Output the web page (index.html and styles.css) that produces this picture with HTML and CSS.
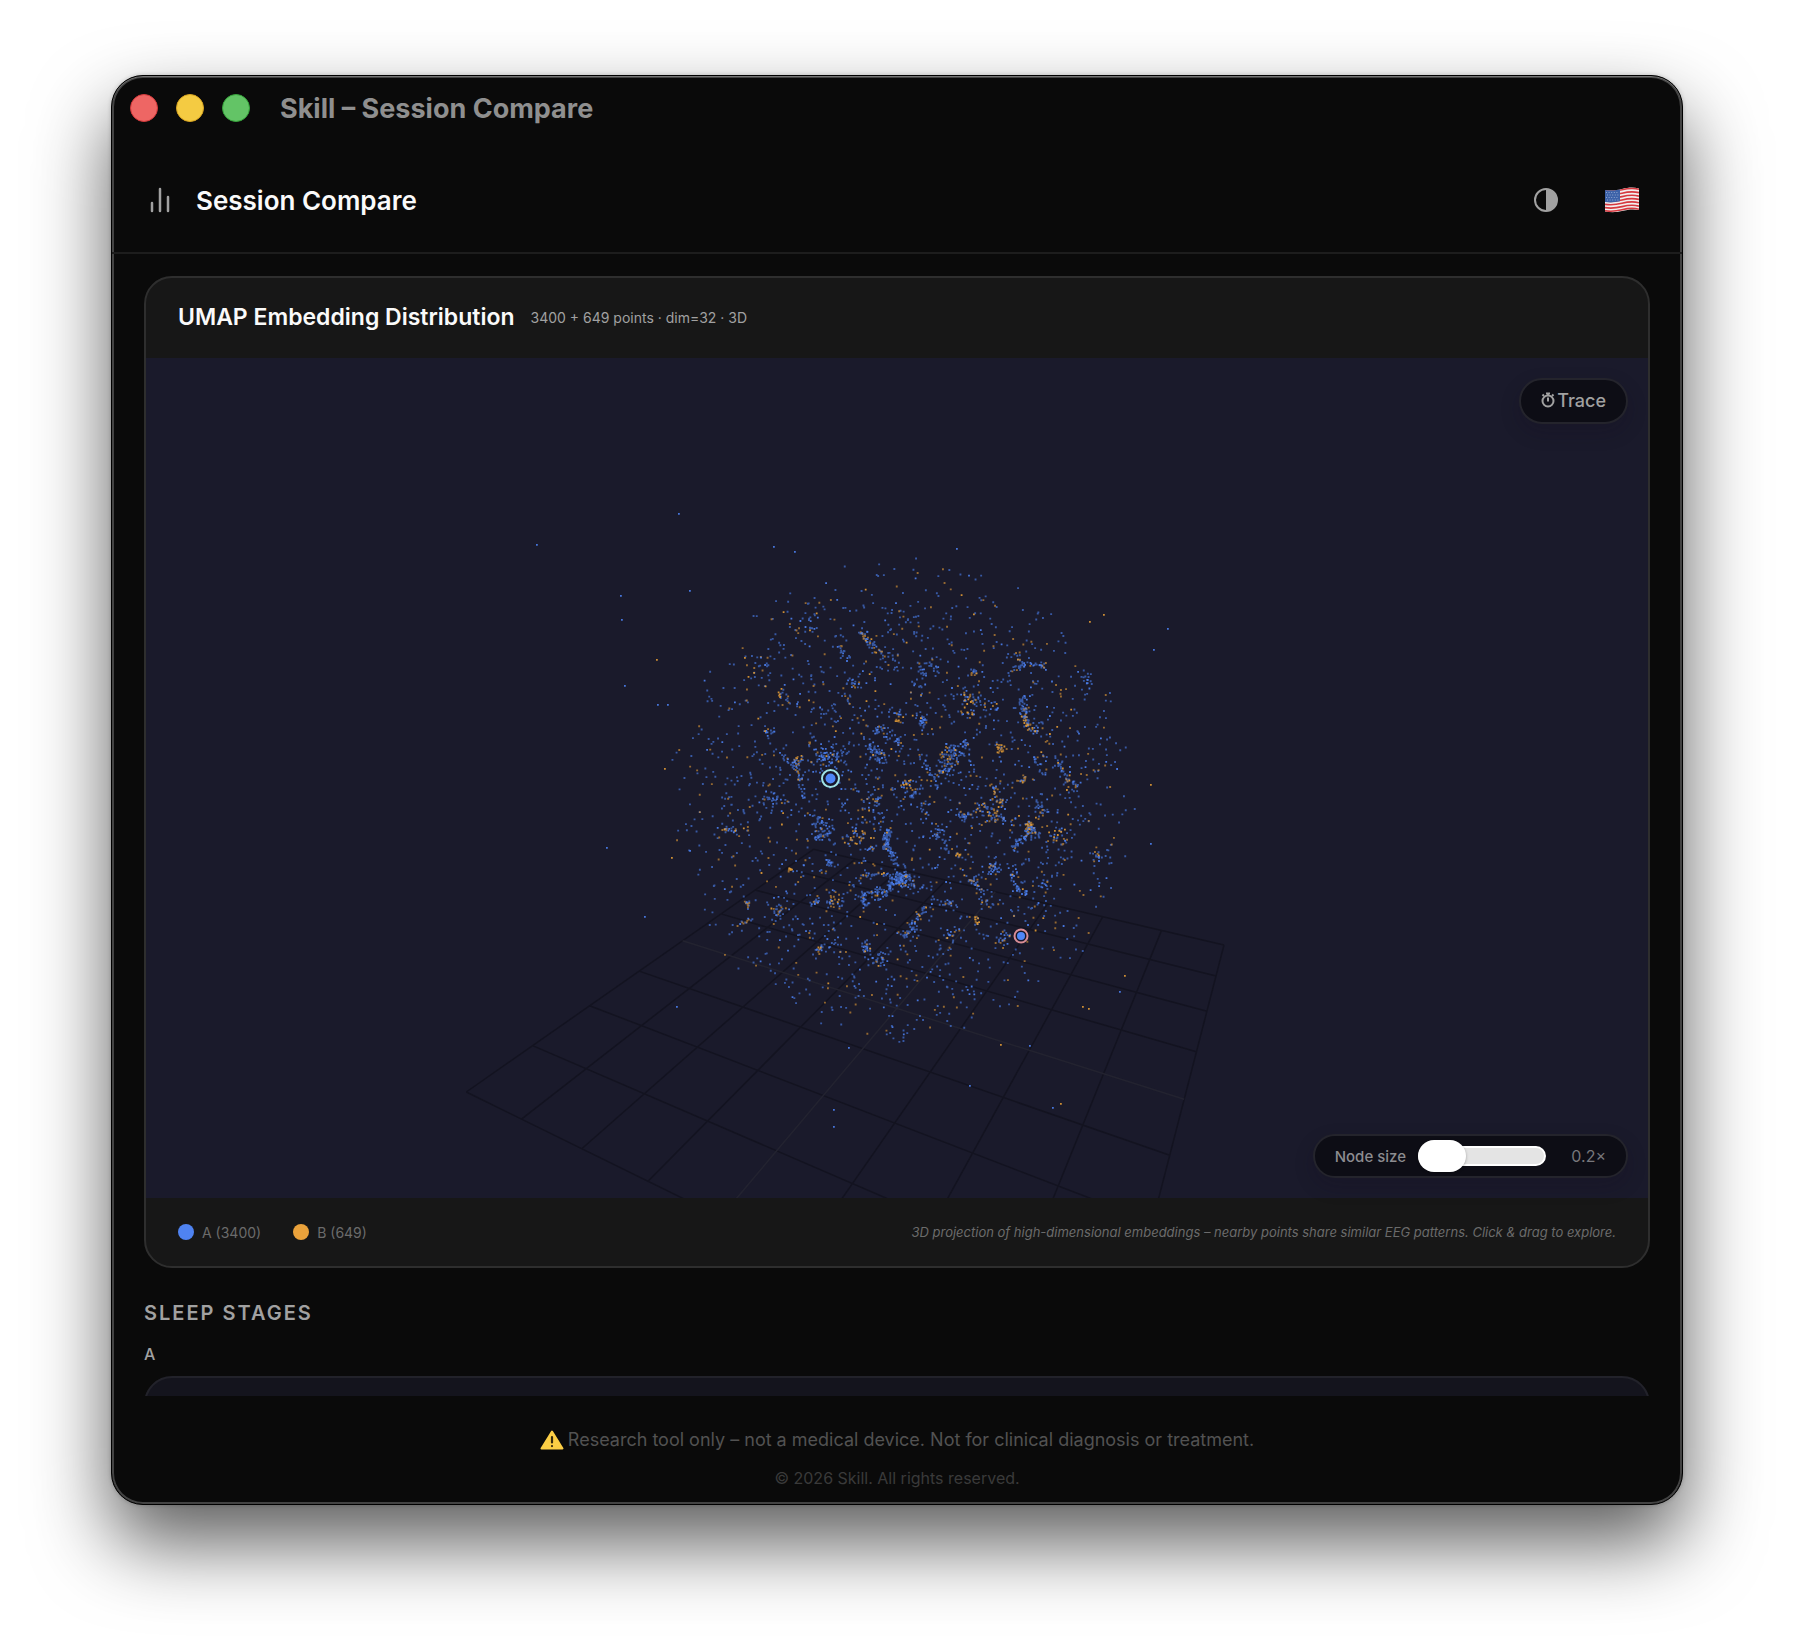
FILE: index.html
```html
<!DOCTYPE html>
<html lang="en">
<head>
<meta charset="utf-8">
<title>Skill – Session Compare</title>
<link rel="stylesheet" href="styles.css">
</head>
<body>
<div class="window">
  <div class="titlebar">
    <div class="lights">
      <button class="light light-close" type="button" aria-label="Close"></button>
      <button class="light light-min" type="button" aria-label="Minimize"></button>
      <button class="light light-max" type="button" aria-label="Zoom"></button>
    </div>
    <span class="window-title">Skill – Session Compare</span>
  </div>

  <header class="header">
    <svg class="bars-icon" viewBox="0 0 24 28" aria-hidden="true"><path d="M4 17v8M12 3v22M20 11v14"/></svg>
    <h1 class="header-title">Session Compare</h1>
    <div class="header-actions">
      <button class="icon-button" type="button" aria-label="Toggle theme">
        <svg class="theme-icon" viewBox="0 0 24 24"><circle cx="12" cy="12" r="11"/><path d="M12 1a11 11 0 0 1 0 22z"/></svg>
      </button>
      <button class="icon-button" type="button" aria-label="Language">
        <svg class="flag-icon" viewBox="0 0 34 26">
          <defs><clipPath id="flag-shape"><path d="M0 3C6 4 11 3.500 17 2S28 0 34 1.500V23C28 22 23 22.500 17 24S6 25.500 0 24.500Z"/></clipPath></defs>
          <g clip-path="url(#flag-shape)">
            <path fill="#f2eeee" d="M0 0h34v26H0z"/>
            <g fill="none" stroke="#d6383f" stroke-width="1.7">
              <path d="M0 3.800C6 4.800 11 4.300 17 2.800S28 .8 34 2.300M0 7.200C6 8.200 11 7.700 17 6.200S28 4.200 34 5.700M0 10.600C6 11.600 11 11.100 17 9.600S28 7.600 34 9.100M0 14C6 15 11 14.500 17 13S28 11 34 12.500M0 17.300C6 18.300 11 17.800 17 16.300S28 14.300 34 15.800M0 20.600C6 21.600 11 21.100 17 19.600S28 17.600 34 19.100M0 23.800C6 24.800 11 24.300 17 22.800S28 20.800 34 22.300"/>
            </g>
            <path fill="#3d62a8" d="M0 0H15V14.300C10 15.400 5 15.800 0 15Z"/>
            <path stroke="#8fa6d0" stroke-width="1" stroke-dasharray="1 1.600" d="M1 5.500h13M2 8h13M1 10.500h13M2 13h13"/>
          </g>
        </svg>
      </button>
    </div>
  </header>

  <main class="content">
    <section class="card">
      <div class="card-header">
        <h2 class="card-title">UMAP Embedding Distribution</h2>
        <span class="card-meta">3400 + 649 points · dim=32 · 3D</span>
      </div>
      <div class="plot">
        <svg class="plot-scene" id="scene" viewBox="0 0 1502 840" preserveAspectRatio="xMidYMid slice" role="img" aria-label="3D scatter of embeddings">
          <path class="grid-line" id="grid"/>
          <path class="grid-axis" id="axes"/>
          <path class="dots-a dim" id="a-dim"/>
          <path class="dots-b dim" id="b-dim"/>
          <path class="dots-a" id="a-bright"/>
          <path class="dots-b" id="b-bright"/>
          <circle class="ring ring-teal" cx="684.500" cy="420.500" r="8.500"/>
          <circle class="marker" cx="684.500" cy="420.500" r="5"/>
          <circle class="ring ring-pink" cx="875" cy="578" r="6.500"/>
          <circle class="marker" cx="875" cy="578" r="4"/>
        </svg>
        <button class="pill trace" type="button">
          <svg class="watch-icon" viewBox="0 0 14 16" aria-hidden="true"><circle cx="7" cy="9" r="5.500"/><path d="M7 5.500v4M5 1.500h4M7 1.500v2M11 4l1.500-1.500M3 4L1.500 2.500"/></svg>
          <span>Trace</span>
        </button>
        <div class="pill size">
          <label for="node-size">Node size</label>
          <input class="slider" id="node-size" type="range" min="0.2" max="3" step="0.1" value="0.2">
          <output class="size-value" for="node-size">0.2×</output>
        </div>
      </div>
      <div class="card-footer">
        <span class="legend"><i class="dot dot-a"></i>A (3400)</span>
        <span class="legend"><i class="dot dot-b"></i>B (649)</span>
        <em class="note">3D projection of high-dimensional embeddings – nearby points share similar EEG patterns. Click &amp; drag to explore.</em>
      </div>
    </section>

    <section class="stages">
      <h2 class="section-title">SLEEP STAGES</h2>
      <h3 class="session-label">A</h3>
      <div class="stage-card"></div>
    </section>
  </main>

  <footer class="footer">
    <p class="disclaimer">
      <svg class="warn-icon" viewBox="0 0 24 20" aria-hidden="true"><path fill="#fbce45" stroke="#fbce45" stroke-width="2" stroke-linejoin="round" d="M12 1.500L22.500 18.500H1.500Z"/><path stroke="#33290f" stroke-width="2.200" stroke-linecap="round" d="M12 7v5.500M12 16v.1"/></svg>
      <span>Research tool only – not a medical device. Not for clinical diagnosis or treatment.</span>
    </p>
    <p class="copyright">© 2026 Skill. All rights reserved.</p>
  </footer>
</div>
<script src="scatter.js"></script>
</body>
</html>
```

FILE: styles.css
```css
* { box-sizing: border-box; }

body {
  margin: 0;
  height: 100vh;
  padding: 75px 111px 147px;
  background: #fff;
  color: #fafafa;
  font-family: Inter, "Liberation Sans", sans-serif;
  display: flex;
}

h1, h2, h3, p { margin: 0; }

button {
  font: inherit;
  color: inherit;
  border: 0;
  padding: 0;
  background: none;
}

.window {
  flex: 1;
  min-width: 0;
  display: flex;
  flex-direction: column;
  background: #0a0a0a;
  border: 1px solid #000;
  border-radius: 32px;
  box-shadow:
    inset 0 1px 0 #757575,
    inset 0 0 0 2px #434343,
    0 38px 78px rgba(0, 0, 0, 0.64),
    0 0 4px rgba(0, 0, 0, 0.2);
}

.titlebar {
  height: 72px;
  padding: 0 18px 8px;
  display: flex;
  align-items: center;
  gap: 30px;
}

.lights { display: flex; gap: 18px; }
.light { width: 28px; height: 28px; border-radius: 50%; border: 1px solid; }
.light-close { background: #ee6664; border-color: #d5383a; }
.light-min { background: #f4cb42; border-color: #d9a520; }
.light-max { background: #63c466; border-color: #35a33a; }

.window-title { font-size: 27px; font-weight: 700; color: #8f8f8f; }

.header {
  height: 106px;
  padding: 0 30px 0 36px;
  display: flex;
  align-items: center;
  gap: 24px;
  border-bottom: 2px solid #1d1d1d;
}

.bars-icon {
  width: 24px;
  height: 28px;
  fill: none;
  stroke: #a1a1a1;
  stroke-width: 2.5;
  stroke-linecap: round;
}

.header-title { font-size: 26px; font-weight: 600; }
.header-actions { margin-left: auto; display: flex; gap: 16px; }
.icon-button { width: 60px; height: 60px; display: grid; place-items: center; }
.theme-icon { width: 24px; height: 24px; }
.theme-icon circle { fill: none; stroke: #a1a1a1; stroke-width: 2; }
.theme-icon path { fill: #a1a1a1; }
.flag-icon { width: 34px; height: 26px; }

.content {
  flex: 1;
  min-height: 0;
  overflow: hidden;
  padding: 22px 32px 0;
}

.card {
  background: #171717;
  border: 2px solid #2e2e2e;
  border-radius: 28px;
  overflow: hidden;
}

.card-header {
  height: 80px;
  padding: 0 32px 2px;
  display: flex;
  align-items: center;
  gap: 16px;
}

.card-title { font-size: 23px; font-weight: 600; }
.card-meta { font-size: 14px; color: #a1a1a1; }

.plot {
  position: relative;
  aspect-ratio: 751 / 420;
  background: #1a1a2b;
}

.plot-scene { display: block; width: 100%; height: 100%; }
.grid-line { fill: none; stroke: #131320; stroke-width: 1.5; }
.grid-axis { fill: none; stroke: #232330; stroke-width: 1.5; }
.dots-a { fill: #4b7fee; opacity: 0.9; }
.dots-b { fill: #e09a35; opacity: 0.9; }
.dots-a.dim, .dots-b.dim { opacity: 0.62; }
.marker { fill: #4f86f7; }
.ring { fill: #16162a; stroke-width: 2; }
.ring-teal { stroke: #9fe3e6; }
.ring-pink { stroke: #d98d95; }

.pill {
  position: absolute;
  right: 20px;
  display: flex;
  align-items: center;
  border: 2px solid #24242c;
  border-radius: 23px;
  background: #0d0d15;
  box-shadow: 0 8px 20px rgba(20, 10, 30, 0.2);
}

.trace { top: 20px; height: 46px; padding: 0 20px 2px; gap: 2px; font-size: 18px; font-weight: 500; color: #a1a1a1; }
.watch-icon { width: 14px; height: 16px; fill: none; stroke: #a1a1a1; stroke-width: 2; }
.size { bottom: 20px; height: 44px; padding: 0 20px; gap: 12px; font-size: 15px; font-weight: 500; color: #8c8c90; }

.slider {
  appearance: none;
  width: 128px;
  height: 32px;
  margin: 0;
  background: none;
}

.slider::-webkit-slider-runnable-track {
  height: 20px;
  border-radius: 10px;
  border: 2px solid #fff;
  background: #e4e4e4;
}

.slider::-webkit-slider-thumb {
  appearance: none;
  width: 48px;
  height: 32px;
  margin: -8px -2px 0;
  border-radius: 16px;
  background: #fff;
  box-shadow: 0 1px 3px rgba(0, 0, 0, 0.3);
}

.size-value { width: 48px; text-align: right; font-size: 16px; font-weight: 400; color: #77777b; }

.card-footer {
  min-height: 68px;
  padding: 0 32px;
  display: flex;
  align-items: center;
  gap: 32px;
  font-size: 14px;
  color: #6b6b6b;
}

.legend { display: flex; align-items: center; gap: 8px; }
.dot { width: 16px; height: 16px; border-radius: 50%; }
.dot-a { background: #4f83f1; }
.dot-b { background: #eaa23b; }
.note { margin-left: auto; font-size: 13px; }

.stages { padding-top: 31px; }
.section-title { font-size: 20px; line-height: 28px; font-weight: 600; letter-spacing: 2px; color: #a1a1a1; }
.session-label { margin-top: 15px; font-size: 16px; line-height: 24px; font-weight: 500; color: #a1a1a1; }
.stage-card {
  height: 240px;
  margin-top: 10px;
  background: #14141d;
  border: 2px solid #22222a;
  border-radius: 28px;
}

.footer {
  padding: 30px 31px 14px;
  display: flex;
  flex-direction: column;
  align-items: center;
  gap: 12px;
}

.disclaimer { display: flex; align-items: center; gap: 4px; font-size: 18px; line-height: 28px; color: #525252; }
.warn-icon { width: 24px; height: 20px; }
.copyright { font-size: 16px; line-height: 24px; color: #3a3a3a; }
```

FILE: scatter.js
```js
// Seeded generator, so that the cloud is the same on every load.
let seed = 20260;
function rnd() {
  seed = (seed * 1664525 + 1013904223) % 4294967296;
  return seed / 4294967296;
}
const gauss = () => rnd() + rnd() + rnd() - 1.5;

const paths = { 'a-dim': '', 'b-dim': '', 'a-bright': '', 'b-bright': '' };
function dot(x, y, group, bright) {
  const s = bright ? 1.8 : 1.9;
  paths[group + (bright ? '-bright' : '-dim')] +=
    `M${x.toFixed(1)} ${y.toFixed(1)}h${s}v${s}h-${s}z`;
}

// Cluster data is stored in layout units; this maps it to the scene.
const sx = (x) => 493 + x / 2.8;
const sy = (y) => 171 + y / 2.904;

// Strands: [count, spread, share of B, x1, y1, x2, y2, ...]
const strands = [
  [26, 6, .7, 618, 298, 640, 325], [26, 10, .4, 640, 325, 690, 372], [30, 12, .05, 770, 450, 812, 380, 838, 420],
  [26, 14, .2, 570, 500, 592, 440, 606, 445], [20, 12, .1, 560, 345, 580, 375], [24, 8, .1, 1030, 412, 1085, 388],
  [18, 6, .1, 1095, 383, 1138, 400], [44, 12, .25, 900, 468, 945, 500, 1005, 518], [24, 20, .5, 930, 505, 915, 535],
  [60, 8, .3, 1070, 505, 1090, 580], [16, 12, .1, 1070, 500, 1090, 475], [16, 14, .3, 1090, 580, 1115, 588],
  [34, 12, .05, 790, 545, 792, 572], [20, 14, .7, 710, 545, 730, 545], [40, 14, .05, 632, 610, 652, 640, 672, 672],
  [24, 6, .05, 640, 625, 690, 658], [26, 20, .08, 660, 570, 680, 600], [18, 12, .2, 715, 610, 730, 630],
  [90, 38, .08, 495, 665, 530, 655, 560, 650], [46, 10, .15, 395, 648, 440, 690, 460, 775], [20, 12, .5, 430, 675, 452, 668],
  [90, 18, .2, 868, 630, 860, 690, 820, 745], [34, 24, .1, 870, 650, 905, 660], [24, 14, .08, 790, 650, 815, 720],
  [16, 10, .05, 905, 618, 912, 624], [22, 12, .8, 1008, 630, 1014, 634], [14, 6, .05, 1105, 665, 1135, 715],
  [44, 14, .15, 1178, 675, 1190, 715, 1225, 755], [14, 8, .8, 1062, 735, 1082, 718], [34, 10, .5, 985, 738, 1005, 775, 1012, 808],
  [70, 22, .25, 950, 805, 990, 820, 1020, 850], [30, 14, .1, 900, 830, 925, 832], [50, 8, .6, 1090, 850, 1094, 875],
  [40, 8, .08, 1092, 876, 1042, 925], [26, 14, .05, 1098, 872, 1110, 882], [26, 10, .5, 736, 740, 756, 730],
  [24, 16, .08, 750, 775, 775, 752], [40, 28, .25, 645, 860, 648, 800, 662, 765], [34, 34, .15, 345, 805, 375, 765],
  [36, 24, .2, 490, 835, 525, 850], [34, 16, .08, 490, 888, 535, 880], [24, 10, .3, 225, 855, 245, 872, 275, 877],
  [44, 26, .5, 580, 900, 625, 880], [80, 8, .04, 697, 862, 686, 925], [32, 8, .04, 697, 925, 716, 975],
  [34, 6, .3, 610, 1005, 670, 998, 710, 1008], [110, 14, .04, 740, 995, 715, 1025, 670, 1060], [60, 18, .04, 720, 1015, 772, 1026],
  [46, 10, .08, 670, 1040, 625, 1062, 628, 1102], [40, 24, .05, 835, 870, 848, 905], [16, 16, .2, 790, 790, 805, 840],
  [36, 18, .15, 980, 975, 1000, 978], [46, 12, .2, 925, 1005, 955, 1045, 968, 1095], [46, 12, .06, 1042, 985, 1050, 1035, 1078, 1060],
  [18, 16, .1, 1110, 800, 1135, 820], [36, 22, .4, 1155, 900, 1195, 875], [14, 14, .05, 1120, 1030, 1145, 1040],
  [34, 12, .08, 740, 1180, 775, 1145], [26, 8, .3, 765, 1140, 805, 1092], [30, 10, .15, 490, 1228, 520, 1212, 575, 1190],
  [24, 14, .1, 630, 1190, 632, 1230], [26, 18, .1, 650, 1252, 700, 1245], [26, 22, .6, 525, 1050, 550, 1095],
  [16, 6, .1, 478, 1090, 502, 1076], [14, 10, .6, 295, 1095, 305, 1085], [14, 10, .4, 290, 1140, 312, 1128],
  [14, 6, .8, 940, 1128, 948, 1142], [12, 4, .9, 417, 988, 424, 986], [22, 18, .2, 1010, 1190, 1025, 1180],
  [14, 12, .6, 940, 405, 936, 412], [16, 14, .1, 1250, 420, 1262, 450], [6, 10, .1, 918, 1336, 930, 1340],
  [16, 18, .1, 1285, 950, 1298, 930], [22, 24, .2, 480, 280, 482, 250], [14, 16, .4, 400, 460, 405, 490],
  [22, 30, .2, 330, 370, 345, 440], [16, 10, .05, 520, 960, 535, 972], [16, 12, .1, 355, 590, 368, 580],
  [16, 18, .2, 860, 1095, 875, 1070], [18, 16, .1, 860, 1180, 885, 1160], [20, 24, .4, 385, 1110, 400, 1100],
  [12, 8, .05, 640, 930, 660, 920], [12, 6, .7, 888, 940, 896, 948], [10, 24, .05, 695, 1465, 750, 1480]
];

for (const [count, spread, share, ...p] of strands) {
  const legs = p.length / 2 - 1;
  for (let i = 0; i < count * 0.85; i++) {
    const t = rnd() * legs;
    const k = Math.floor(t);
    const f = t - k;
    const x = p[2 * k] + (p[2 * k + 2] - p[2 * k]) * f + gauss() * spread * 1.15;
    const y = p[2 * k + 1] + (p[2 * k + 3] - p[2 * k + 1]) * f + gauss() * spread * 1.15;
    dot(sx(x), sy(y), rnd() < share ? 'b' : 'a', rnd() < 0.25);
  }
}

// Loose points fill a ball around the clusters, a little denser near its shell.
for (let n = 0; n < 2000;) {
  const x = rnd() * 2 - 1, y = rnd() * 2 - 1, z = rnd() * 2 - 1;
  const r = x * x + y * y + z * z;
  if (r > 1 || (r < 0.4 && rnd() < 0.4)) continue;
  dot(757 + x * 236, 440 + y * 242, rnd() < 0.19 ? 'b' : 'a', rnd() < 0.1);
  n++;
}

// Far outliers.
const outliers = [
  [532, 156, 'a'], [390, 187, 'a'], [474, 238, 'a'], [475, 262, 'a'], [543, 233, 'a'], [627, 189, 'a'], [648, 194, 'a'],
  [810, 191, 'a'], [1021, 271, 'a'], [1007, 292, 'a'], [510, 302, 'b'], [478, 328, 'a'], [511, 347, 'a'], [521, 347, 'a'],
  [460, 490, 'a'], [498, 559, 'a'], [1004, 427, 'b'], [978, 618, 'b'], [973, 634, 'a'], [936, 649, 'b'], [942, 651, 'b'],
  [530, 649, 'a'], [687, 752, 'a'], [687, 769, 'a'], [823, 728, 'a'], [914, 746, 'b'], [906, 750, 'a'], [702, 690, 'a'],
  [854, 687, 'b'], [883, 688, 'a'], [957, 257, 'b'], [943, 264, 'b'], [1004, 486, 'a'], [518, 411, 'b'], [525, 500, 'b']
];
outliers.forEach(([x, y, group]) => dot(x, y - 1, group, true));

for (const id in paths) document.getElementById(id).setAttribute('d', paths[id]);

// Floor grid, eight cells a side, in perspective.
function floor(u, v) {
  const w = 1 - 0.02552 * u - 0.04942 * v;
  return `${((23.81 * u - 59.22 * v + 667.4) / w).toFixed(1)} ${((-3.02 * u - 5.94 * v + 491.3) / w).toFixed(1)}`;
}
let grid = '', axes = '';
for (let i = 0; i <= 8; i++) {
  const pair = `M${floor(i, 0)}L${floor(i, 8)}M${floor(0, i)}L${floor(8, i)}`;
  if (i === 4) axes += pair; else grid += pair;
}
document.getElementById('grid').setAttribute('d', grid);
document.getElementById('axes').setAttribute('d', axes);
```
